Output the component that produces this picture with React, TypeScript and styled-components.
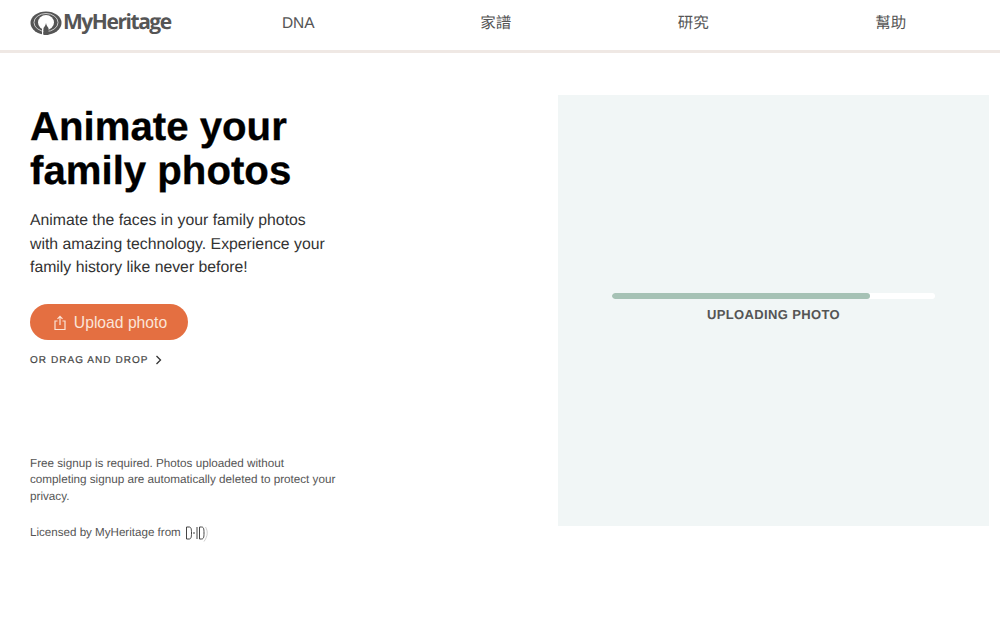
import React from "react";
import styled, { createGlobalStyle } from "styled-components";

const GlobalStyle = createGlobalStyle`
  html, body {
    margin: 0;
    padding: 0;
    background: #fff;
    font-family: "Liberation Sans", Arial, "Noto Sans CJK TC", sans-serif;
    text-rendering: geometricPrecision;
  }
`;

const Page = styled.div`
  width: 1000px;
  height: 625px;
  overflow: hidden;
`;

const Header = styled.header`
  height: 50px;
  display: flex;
  align-items: center;
  border-bottom: 3px solid #efe8e4;
`;

const Logo = styled.div`
  width: 200px;
  padding: 0 0 5px 30px;
  box-sizing: border-box;
  display: flex;
  align-items: center;
  gap: 1px;
`;

const LogoText = styled.span`
  font-family: "Open Sans", sans-serif;
  font-weight: 700;
  font-size: 21px;
  line-height: 24px;
  letter-spacing: -1.45px;
  color: #555;
  position: relative;
  top: -1px;
`;

const Nav = styled.nav`
  display: flex;
  align-items: center;
  margin-left: -0.5px;
  padding-bottom: 3px;
`;

const NavItem = styled.a`
  width: 197.5px;
  height: 20px;
  line-height: 20px;
  overflow: hidden;
  text-align: center;
  font-size: 15.500px;
  color: #555;
`;

const Main = styled.main`
  display: flex;
  justify-content: space-between;
  padding: 42px 11px 0 30px;
`;

const Intro = styled.section`
  width: 320px;
`;

const Title = styled.h1`
  margin: 10px 0 0;
  width: 300px;
  font-size: 40.200px;
  line-height: 44px;
  font-weight: 700;
  color: #000;
  -webkit-text-stroke: 0.3px #000;
`;

const Lead = styled.p`
  margin: 16px 0 0;
  width: 300px;
  font-size: 15.800px;
  line-height: 23.500px;
  color: #333;
`;

const UploadButton = styled.button`
  margin-top: 24px;
  width: 158px;
  height: 36px;
  border: none;
  border-radius: 18px;
  background: #e46f41;
  color: #fbe4d8;
  font: inherit;
  font-size: 15.700px;
  display: flex;
  align-items: center;
  justify-content: center;
  gap: 7px;
  padding: 2px 0 0 2px;
`;

const DragHint = styled.div`
  margin-top: 15px;
  display: flex;
  align-items: center;
  gap: 7px;
  font-size: 10px;
  letter-spacing: 1.05px;
  color: #444;
  -webkit-text-stroke: 0.2px #444;
`;

const Legal = styled.p`
  margin: 90px 0 0;
  width: 310px;
  font-size: 11.700px;
  line-height: 16.700px;
  color: #555;
`;

const License = styled.div`
  margin-top: 18px;
  display: flex;
  align-items: center;
  gap: 4px;
  font-size: 11.600px;
  color: #555;
`;

const DidMark = styled.svg`
  width: 24px;
  height: 18px;
`;

const Panel = styled.section`
  width: 431px;
  height: 431px;
  background: #f1f6f6;
  display: flex;
  flex-direction: column;
  align-items: center;
  padding-top: 198px;
  box-sizing: border-box;
`;

const Track = styled.div`
  width: 323px;
  height: 6px;
  border-radius: 3px;
  background: #fff;
  overflow: hidden;
`;

const Fill = styled.div`
  height: 100%;
  background: #a6c2b5;
  border-radius: 3px;
`;

const Status = styled.div`
  margin-top: 8px;
  font-size: 13px;
  font-weight: 700;
  letter-spacing: 0.35px;
  color: #555;
`;

function LogoMark() {
  return (
    <svg width="32" height="24" viewBox="0 0 32 24" fill="none">
      <ellipse cx="16" cy="12" rx="15.500" ry="11.500" fill="#555" />
      <ellipse cx="16" cy="11.500" rx="12" ry="9" stroke="#fff" strokeWidth="1" opacity="0.7" />
      <ellipse cx="16" cy="11.500" rx="8" ry="7.500" fill="#fff" />
      <path d="M13.500 24 L13.500 17 C14.500 15.500 15.500 14.500 16 12 C16.500 14.500 17.500 15.500 18.500 17 L18.500 24 Z" fill="#555" />
      <path d="M12 24 L12 17.500 L13.200 18 L13.200 24 Z" fill="#fff" />
    </svg>
  );
}

function ShareIcon() {
  return (
    <svg width="14" height="16" viewBox="0 0 14 16" fill="none" stroke="#fbe4d8" strokeWidth="1.2">
      <path d="M4.500 6 H2 V14.500 H12 V6 H9.500" />
      <path d="M7 10 V1.500 M4.500 3.800 L7 1.300 L9.500 3.800" />
    </svg>
  );
}

function Chevron() {
  return (
    <svg width="7" height="10" viewBox="0 0 7 10" fill="none" stroke="#333" strokeWidth="1.3">
      <path d="M1.500 1 L5.500 5 L1.500 9" />
    </svg>
  );
}

function DidLogo() {
  return (
    <DidMark viewBox="0 0 24 18" fill="none" stroke="#444" strokeWidth="1">
      <path d="M1.500 3 H4 C6 3 6.500 4.500 6.500 9 C6.500 13.500 6 15 4 15 H1.500 Z" />
      <path d="M8 9 H10" />
      <path d="M12 3 V15" />
      <path d="M14.500 3 H16.500 C18.500 3 19 4.500 19 9 C19 13.500 18.500 15 16.500 15 H14.500 Z" />
      <path d="M20.500 3 C23 7 23 12 19 17.500" stroke="#aaa" strokeWidth="0.6" />
    </DidMark>
  );
}

export default function App() {
  const progress = 80;

  return (
    <Page>
      <GlobalStyle />
      <Header>
        <Logo>
          <LogoMark />
          <LogoText>MyHeritage</LogoText>
        </Logo>
        <Nav>
          <NavItem>DNA</NavItem>
          <NavItem>家譜</NavItem>
          <NavItem>研究</NavItem>
          <NavItem>幫助</NavItem>
        </Nav>
      </Header>
      <Main>
        <Intro>
          <Title>Animate your family photos</Title>
          <Lead>
            Animate the faces in your family photos with amazing technology.
            Experience your family history like never before!
          </Lead>
          <UploadButton>
            <ShareIcon />
            Upload photo
          </UploadButton>
          <DragHint>
            OR DRAG AND DROP
            <Chevron />
          </DragHint>
          <Legal>
            Free signup is required. Photos uploaded without completing signup
            are automatically deleted to protect your privacy.
          </Legal>
          <License>
            Licensed by MyHeritage from
            <DidLogo />
          </License>
        </Intro>
        <Panel>
          <Track>
            <Fill style={{ width: `${progress}%` }} />
          </Track>
          <Status>UPLOADING PHOTO</Status>
        </Panel>
      </Main>
    </Page>
  );
}
